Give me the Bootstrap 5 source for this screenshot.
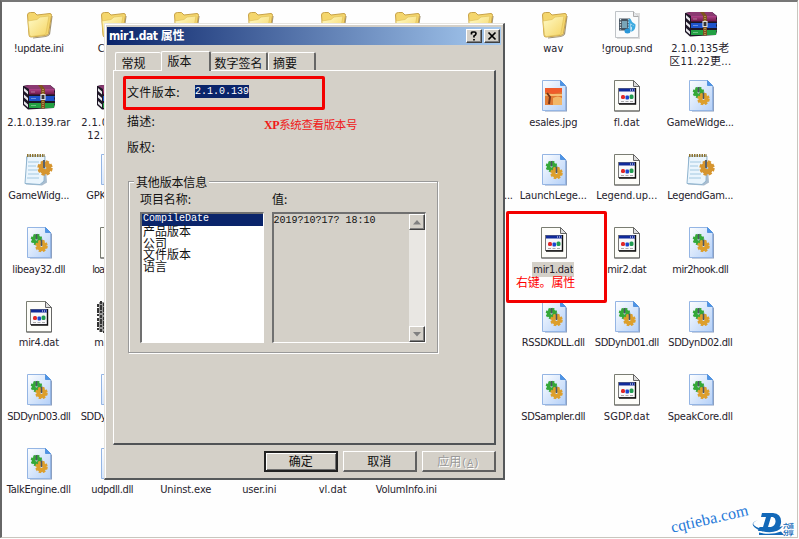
<!DOCTYPE html>
<html lang="zh-CN">
<head>
<meta charset="utf-8">
<title>mir1.dat 属性</title>
<link href="https://cdn.jsdelivr.net/npm/bootstrap@5.3.0/dist/css/bootstrap.min.css" rel="stylesheet">
<style>
body{width:799px;height:539px;overflow:hidden;background:#fefefe;color:#111;font:12px/13px "DejaVu Sans Condensed","Noto Sans CJK SC",sans-serif}
.desk{width:798px;height:538px;border-top:2px solid #777;border-left:2px solid #666;border-right:1px solid #c9c6be;border-bottom:1px solid #c9c6be;overflow:hidden}
.files{display:grid;grid-template-columns:repeat(10,73.5px);grid-auto-rows:73.5px;padding-top:4.5px}
.file svg{width:32px;height:32px;display:block;margin:0 auto 3.5px;position:relative;left:.5px;flex:none}
.lbl{font-size:11px;line-height:13px;white-space:nowrap;color:#26222c}
.lbl.sel{background:#d4d0c8;outline:1px solid #d4d0c8}
.fit{display:inline-block;white-space:pre}
.dlg{left:104px;top:23px;width:401px;height:457px;background:#d4d0c8;border:1px solid #e7e5e0;border-right:2px solid #55585a;border-bottom:2px solid #55585a;box-shadow:inset 1px 1px #fff;padding:3px 2px 0 2px;font-family:"Noto Sans CJK SC",sans-serif}
.ttl{height:18px;background:linear-gradient(90deg,#0a246a,#a6caf0);color:#fff;font-weight:700;padding:0 1px 0 2px}
.ttl .fit{font-family:"DejaVu Sans Condensed","Noto Sans CJK SC",sans-serif;font-size:12px}
.cap{width:16px;height:14px;background:#d4d0c8;border:1px solid #fff;border-right-color:#404040;border-bottom-color:#404040;box-shadow:inset -1px -1px #808080}
.capx{margin-left:2px}
.tabs{height:24px;padding:0 8px;margin-top:1px}
.tb{height:18px;border-left:1px solid #fff;border-top:1px solid #fff;border-right:2px solid #666;border-radius:2px 2px 0 0;padding-top:3px;text-align:center;white-space:nowrap}
.tb.on{width:50px;height:20px;background:#d4d0c8;position:relative;z-index:1;margin-bottom:-1px;padding:2px 12px 0 0}
.tb.t1{width:46px;border-right:0;padding-right:10px}
.tb.t3{width:57px;border-left:0}
.tb.t4{width:48px;padding-right:13px}
.pane{height:375px;width:383px;margin-left:6px;border:1px solid #fff;border-right:2px solid #505356;border-bottom:2px solid #505356;padding:5px 10px}
.redbox{border:3px solid #f30000;border-radius:2px}
.ver{width:202px;height:34px;margin-left:-1px;padding:0 0 4px 1px}
.mono{font-family:"Liberation Mono","Noto Sans CJK SC",monospace;font-size:10px}
.hl{background:#0a246a;color:#fff;margin-left:15px;height:13px;line-height:13px}
.desc{height:20px;padding-left:3px}
.right{height:31px;padding:10px 0 0 3px}
.note{color:#f01818;margin:10px 0 0 109px;font-size:11.5px;font-family:"Liberation Mono","Noto Sans CJK SC",monospace}
.note b{font:bold 12px "Liberation Serif",serif}
.grp{width:310px;height:172px;margin:20px 0 0 4px;border:1px solid #999;box-shadow:1px 1px #fff,inset 1px 1px #fff;padding:0 11px}
.grp .lg{background:#d4d0c8;padding:0 2px;margin:-7px 0 0 -6px;display:table;position:relative}
.caps{margin-top:4px;height:20px}.caps .c1{width:132px}
.box{border:2px solid #707070;border-right:1px solid #fff;border-bottom:1px solid #fff;height:131px}
.pair{gap:8px}
.lst{width:124px;background:#fff}.lst div{height:11.7px;line-height:10px;padding-left:1px}
.lst .first{background:#0a246a;color:#fff;height:12px}.lst .first .fit{line-height:10px;vertical-align:top}
.val{width:155px}
.sb{width:16px;background:#e9e7e3}.sb .cap{height:16px}
.acts{gap:5.5px;padding:6px 0 0 157px}
.btn3{height:21px;border:1px solid #fff;border-right:2px solid #606060;border-bottom:2px solid #606060;text-align:center;line-height:17px;width:73.5px}
.btn3.def{border:2px solid #222;box-shadow:inset 1px 1px #fff,inset -1px -1px #707070;line-height:15px}
.btn3.off{color:#999;text-shadow:1px 1px #fff}
.mark2{left:506px;top:211px;width:101px;height:92px;color:#f00}
.mark2 .fit{font-family:"Noto Sans CJK SC",sans-serif;margin:61px 0 0 7px}
.wm{left:670px;top:509px;font:16px/20px "Liberation Serif",serif;color:#2478d8;transform:rotate(-13deg)}
.logo{left:751px;top:511px}
</style>
<script src="https://cdn.jsdelivr.net/npm/bootstrap@5.3.0/dist/js/bootstrap.bundle.min.js"></script>
</head>
<body>
<svg width="0" height="0" class="position-absolute">
<defs>
<linearGradient id="gf" x1="0" y1="0" x2="1" y2="1"><stop offset="0" stop-color="#fffbc8"/><stop offset="1" stop-color="#f5d463"/></linearGradient>
<linearGradient id="gd" x1="0" y1="0" x2="1" y2="1"><stop offset="0" stop-color="#fdfeff"/><stop offset="1" stop-color="#b4d0f8"/></linearGradient>
<linearGradient id="gv" x1="0" y1="0" x2="0" y2="1"><stop offset="0" stop-color="#b0448a"/><stop offset="1" stop-color="#6e1848"/></linearGradient>
<symbol id="folder" viewBox="0 0 32 32"><path d="M29 9l-2.500 18q-1 2-4 2.500L10 31" fill="none" stroke="#a09478" stroke-width="1.200"/><path d="M4.500 8q0-2.500 3-2.500h4l2.500 2.500 13-1.500q1.500 0 1.500 2l-3 18q-.5 1.500-3 2L8 30q-2 0-2-2z" fill="#f4d66d" stroke="#c8a248"/><path d="M5 14l9-1.500 3-2.500 9-1-3 17q0 2-3 2L8.500 29.500q-2 0-2-2z" fill="url(#gf)" stroke="#e0c25c" stroke-width=".7"/></symbol>
<symbol id="gear" viewBox="-8 -8 16 16"><circle r="3.800" fill="none" stroke="currentColor" stroke-width="5"/><circle r="6.500" fill="none" stroke="currentColor" stroke-width="2.400" stroke-dasharray="3.200 1.905"/></symbol>
<symbol id="page" viewBox="0 0 32 32"><path d="M6 2h18l5 5v24.500H7z" fill="#6680ac" opacity=".75"/><path d="M4.500.5h18l5 5v25h-23z" fill="url(#gd)" stroke="#94b5e4"/><path d="M22.500.5v5h5z" fill="#4d94e8" stroke="#5594de"/></symbol>
<symbol id="dll" viewBox="0 0 32 32"><use href="#page"/><use href="#gear" x="7" y="6.500" width="13" height="12" color="#34a838"/><use href="#gear" x="11.500" y="12.500" width="14" height="13" color="#dd9f2c"/><path d="M13.500 7v5.500M18.500 12.500v6.500" stroke="#4b5563" stroke-width="1.500"/></symbol>
<symbol id="dat" viewBox="0 0 32 32"><path d="M3.500.5h19l6 6v24.500h-25z" fill="#fdfdf9" stroke="#7a7d72"/><path d="M22.500.5v6h6z" fill="#ddd" stroke="#666"/><path d="M28.500 6.500V31h-25" fill="none" stroke="#666"/><rect x="7.500" y="8.500" width="17" height="15" fill="#f8f8fa" stroke="#777"/><path d="M24.500 8v16H8" fill="none" stroke="#111" stroke-width="1.400"/><rect x="8" y="8.500" width="16" height="3" fill="#102a9a"/><path d="M19 10h1m1 0h1m1 0h.7" stroke="#fff"/><rect x="10" y="15" width="4" height="4" rx="1.500" fill="#e02828"/><rect x="14.500" y="15.500" width="3.500" height="4" rx="1" fill="#1b45cf"/><rect x="18.500" y="14.500" width="4" height="4.500" rx="1.500" fill="#209c50"/><path d="M10 21.500h3m1.500 0h3m1.500 0h3" stroke="#aaa"/></symbol>
<symbol id="rar" viewBox="0 0 32 32"><path d="M0 6l5-1h22l5 4v15l-1 4-26 1.500-5-4.500z" fill="#1d1626"/><path d="M1 6l5-1h21l4.500 4H6z" fill="#8b3a72"/><path d="M6 9h26l-1 2.500 1 3H6z" fill="url(#gv)"/><path d="M6 16h26l-1 2.500 1 2.500H6z" fill="#1e54cc"/><path d="M6 23h26l-1 2 0 3H6z" fill="#22a043"/><path d="M1 8l4 3.500v3L1 11zM1 14.500L5 18v3l-4-3.500zM1 21l4 3.500v3L1 24z" fill="#e8e8ec"/><path d="M8 18.500h5M8 25.500h5M8 12h4" stroke="#fff" opacity=".35"/><path d="M15 5h4l3 4v19.500h-4V9z" fill="#7e5320"/><path d="M20 9v19.500" stroke="#e2c477" stroke-dasharray="1 1"/><path d="M18 14.500h4v5h-4z" fill="#333" stroke="#ddd" stroke-width="1.200"/></symbol>
<symbol id="note" viewBox="0 0 32 32"><path d="M3 3l19 .500 2 25-5 3-16-1z" fill="#6f8fae" opacity=".6"/><path d="M4 2h18l-1 25-4 3.500-15-1z" fill="#eaf5fd" stroke="#8fb4cf"/><path d="M4 1.500h18" stroke="#8c7330" stroke-width="3" stroke-dasharray="1.500 1"/><path d="M5 8h11M5 12h8M5 16h9M5 20h11M4 24h12" stroke="#a3c8e0"/><use href="#gear" x="13" y="6" width="18" height="16" color="#d6952f"/><path d="M21 6v8" stroke="#59616b" stroke-width="2"/></symbol>
<symbol id="snd" viewBox="0 0 32 32"><path d="M5 6h24v26H6z" fill="#bbb" opacity=".5"/><path d="M4.500 4.500h18l5 5v21h-23z" fill="#fafbfc" stroke="#bfc3c7"/><path d="M22.500 4.500v5h5" fill="#e5e7ea" stroke="#aaa"/><rect x="8" y="11.500" width="11" height="12" fill="#465461"/><path d="M9.500 12v11M17.500 12v11" stroke="#dce5ea" stroke-width="1.300" stroke-dasharray="1.300 1.300"/><rect x="11" y="14" width="5" height="7" fill="#79a5b8"/><path d="M18.500 24V12q1 4 5 6 0 4-2 5 1-4-1.500-4.500" stroke="#3eaae0" stroke-width="2" fill="none"/><ellipse cx="16.500" cy="24" rx="3" ry="2.500" fill="#2a96d8"/></symbol>
<symbol id="jpg" viewBox="0 0 32 32"><use href="#page"/><rect x="7" y="8" width="17" height="17" fill="#e07a34"/><path d="M7 8h17v4l-9 2-8-2z" fill="#ef5b2b"/><path d="M7 15h17" stroke="#ffd489" stroke-width="1.500"/><path d="M15 25v-7q5-3 9 0v7z" fill="#f2b768"/><path d="M9 13l3 4-1 7" stroke="#73351d" stroke-width="2" fill="none"/></symbol>
<symbol id="blk" viewBox="0 0 32 32"><path d="M2 1h25v30H2z" fill="#999"/><path d="M1 3v26M4 0v32M7 2v30" stroke="#333" stroke-width="2" stroke-dasharray="3 1 5 1 2 2"/></symbol>
</defs>
</svg>

<main class="desk"><div class="files" id="files"></div></main>

<section class="dlg position-absolute d-flex flex-column">
  <div class="ttl d-flex align-items-center"><span class="fit" data-w="75">mir1.dat 属性</span>
    <span class="cap ms-auto d-flex align-items-center justify-content-center"><svg width="10" height="10" viewBox="0 0 10 10"><path d="M2.500 3.500V2q0-1 1.500-1h1.500Q7 1 7 2.500T5 5v1.500M5 8v1.500" fill="none" stroke="#000" stroke-width="1.700"/></svg></span>
    <span class="cap capx d-flex align-items-center justify-content-center"><svg width="10" height="10" viewBox="0 0 10 10"><path d="M1.500 1.500l7 7m0-7l-7 7" stroke="#000" stroke-width="1.700"/></svg></span>
  </div>
  <div class="tabs d-flex align-items-end">
    <div class="tb t1">常规</div>
    <div class="tb on">版本</div>
    <div class="tb t3">数字签名</div>
    <div class="tb t4">摘要</div>
  </div>
  <div class="pane">
    <div class="redbox ver d-flex align-items-center"><span class="fit" data-w="53">文件版本:</span><span class="hl mono fit" data-w="54">2.1.0.139</span></div>
    <div class="desc d-flex align-items-center"><span class="fit" data-w="28">描述:</span><span class="note fit" data-w="93"><b>XP</b>系统查看版本号</span></div>
    <div class="right"><span class="fit" data-w="28">版权:</span></div>
    <div class="grp">
      <div class="lg"><span class="fit" data-w="71">其他版本信息</span></div>
      <div class="caps d-flex"><span class="c1"><span class="fit" data-w="51">项目名称:</span></span><span>值:</span></div>
      <div class="pair d-flex">
        <div class="box lst"><div class="first"><span class="mono fit" data-w="66">CompileDate</span></div><div>产品版本</div><div>公司</div><div>文件版本</div><div>语言</div></div>
        <div class="box val d-flex"><span class="mono fit" data-w="102">2019?10?17? 18:10</span>
          <div class="sb ms-auto d-flex flex-column justify-content-between">
            <span class="cap d-flex align-items-center justify-content-center"><svg width="8" height="5"><path d="M0 4.500h8L4 0z" fill="#808080"/></svg></span>
            <span class="cap d-flex align-items-center justify-content-center"><svg width="8" height="5"><path d="M0 0h8L4 4.500z" fill="#808080"/></svg></span>
          </div>
        </div>
      </div>
    </div>
  </div>
  <div class="acts d-flex">
    <div class="btn3 def">确定</div><div class="btn3">取消</div><div class="btn3 off">应用<span class="mono">(<u>A</u>)</span></div>
  </div>
</section>

<div class="mark2 redbox position-absolute"><span class="fit" data-w="59">右键。属性</span></div>
<div class="wm position-absolute"><span class="fit" data-w="81">cqtieba.com</span></div>
<svg class="logo position-absolute" width="47" height="26" viewBox="0 0 47 26"><path fill="#1268b8" fill-rule="evenodd" d="M11 2h11q9 1 8 10-1 7-8 8H7l1.500-4h3.500L15 6h-5zM20 6l-3 10h3q4-1 4.500-5t-2.500-5z"/><path d="M7 9q-10 4 1 8 11 3 24-2-7 9-22 5Q-5 13 7 9zM8 21.500q12 3 22-1l3 3.500H8z" fill="#1268b8"/><text x="32" y="17" font-size="6" font-weight="700" textLength="11" fill="#1268b8" font-family="Noto Sans CJK SC">六道</text><text x="32" y="23.500" font-size="6" font-weight="700" textLength="11" fill="#1268b8" font-family="Noto Sans CJK SC">分享</text></svg>

<script>
// [column, row, icon, label, label width, second line, its width]
const files=[
[0,0,'folder','!update.ini',50],[1,0,'folder','Cache',29],[2,0,'folder'],[3,0,'folder'],[4,0,'folder'],[5,0,'folder'],[6,0,'folder'],[7,0,'folder','wav',20],[8,0,'snd','!group.snd',51],[9,0,'rar','2.1.0.135老',58,'区11.22更...',62],
[0,1,'rar','2.1.0.139.rar',63],[1,1,'rar','2.1.0.139老',62,'12.20更...',50],[7,1,'jpg','esales.jpg',48],[8,1,'dat','fl.dat',26],[9,1,'dll','GameWidge...',67],
[0,2,'note','GameWidg...',61],[1,2,'dll','GPKitCli.dll',52],[6,2,'dll','LaunchGam...',66],[7,2,'dll','LaunchLege...',67],[8,2,'dat','Legend.up...',61],[9,2,'note','LegendGam...',66],
[0,3,'dll','libeay32.dll',53],[1,3,'dat','loader.dat',40],[7,3,'dat','mir1.dat',40],[8,3,'dat','mir2.dat',39],[9,3,'dll','mir2hook.dll',56],
[0,4,'dat','mir4.dat',40],[1,4,'blk','mir.ico',36],[7,4,'dll','RSSDKDLL.dll',63],[8,4,'dll','SDDynD01.dll',64],[9,4,'dll','SDDynD02.dll',64],
[0,5,'dll','SDDynD03.dll',63],[1,5,'dll','SDDynD04.dll',63],[6,5,'dll'],[7,5,'dll','SDSampler.dll',64],[8,5,'dat','SGDP.dat',46],[9,5,'dll','SpeakCore.dll',65],
[0,6,'dll','TalkEngine.dll',64],[1,6,'dll','udpdll.dll',42],[2,6,'dll','Uninst.exe',51],[3,6,'dat','user.ini',34],[4,6,'dat','vl.dat',28],[5,6,'dat','VolumInfo.ini',61]];
const grid=document.getElementById('files');
for(const [c,r,ic,a,w,b,w2] of files){
  const d=document.createElement('div');
  d.className='file d-flex flex-column align-items-center';
  d.style.gridArea=`${r+1} / ${c+1}`;
  d.innerHTML=`<svg><use href="#${ic}"/></svg>`+(a?`<span class="lbl fit${a=='mir1.dat'?' sel':''}" data-w="${w}">${a}</span>`:'')+(b?`<span class="lbl fit" data-w="${w2}">${b}</span>`:'');
  grid.append(d);
}
// spread each run of text over its nominal width
for(const e of document.querySelectorAll('.fit')){
  const n=e.textContent.length;
  const run=document.createRange();run.selectNodeContents(e);
  e.style.letterSpacing=((e.dataset.w-run.getBoundingClientRect().width)/n)+'px';
}
</script>
</body>
</html>
